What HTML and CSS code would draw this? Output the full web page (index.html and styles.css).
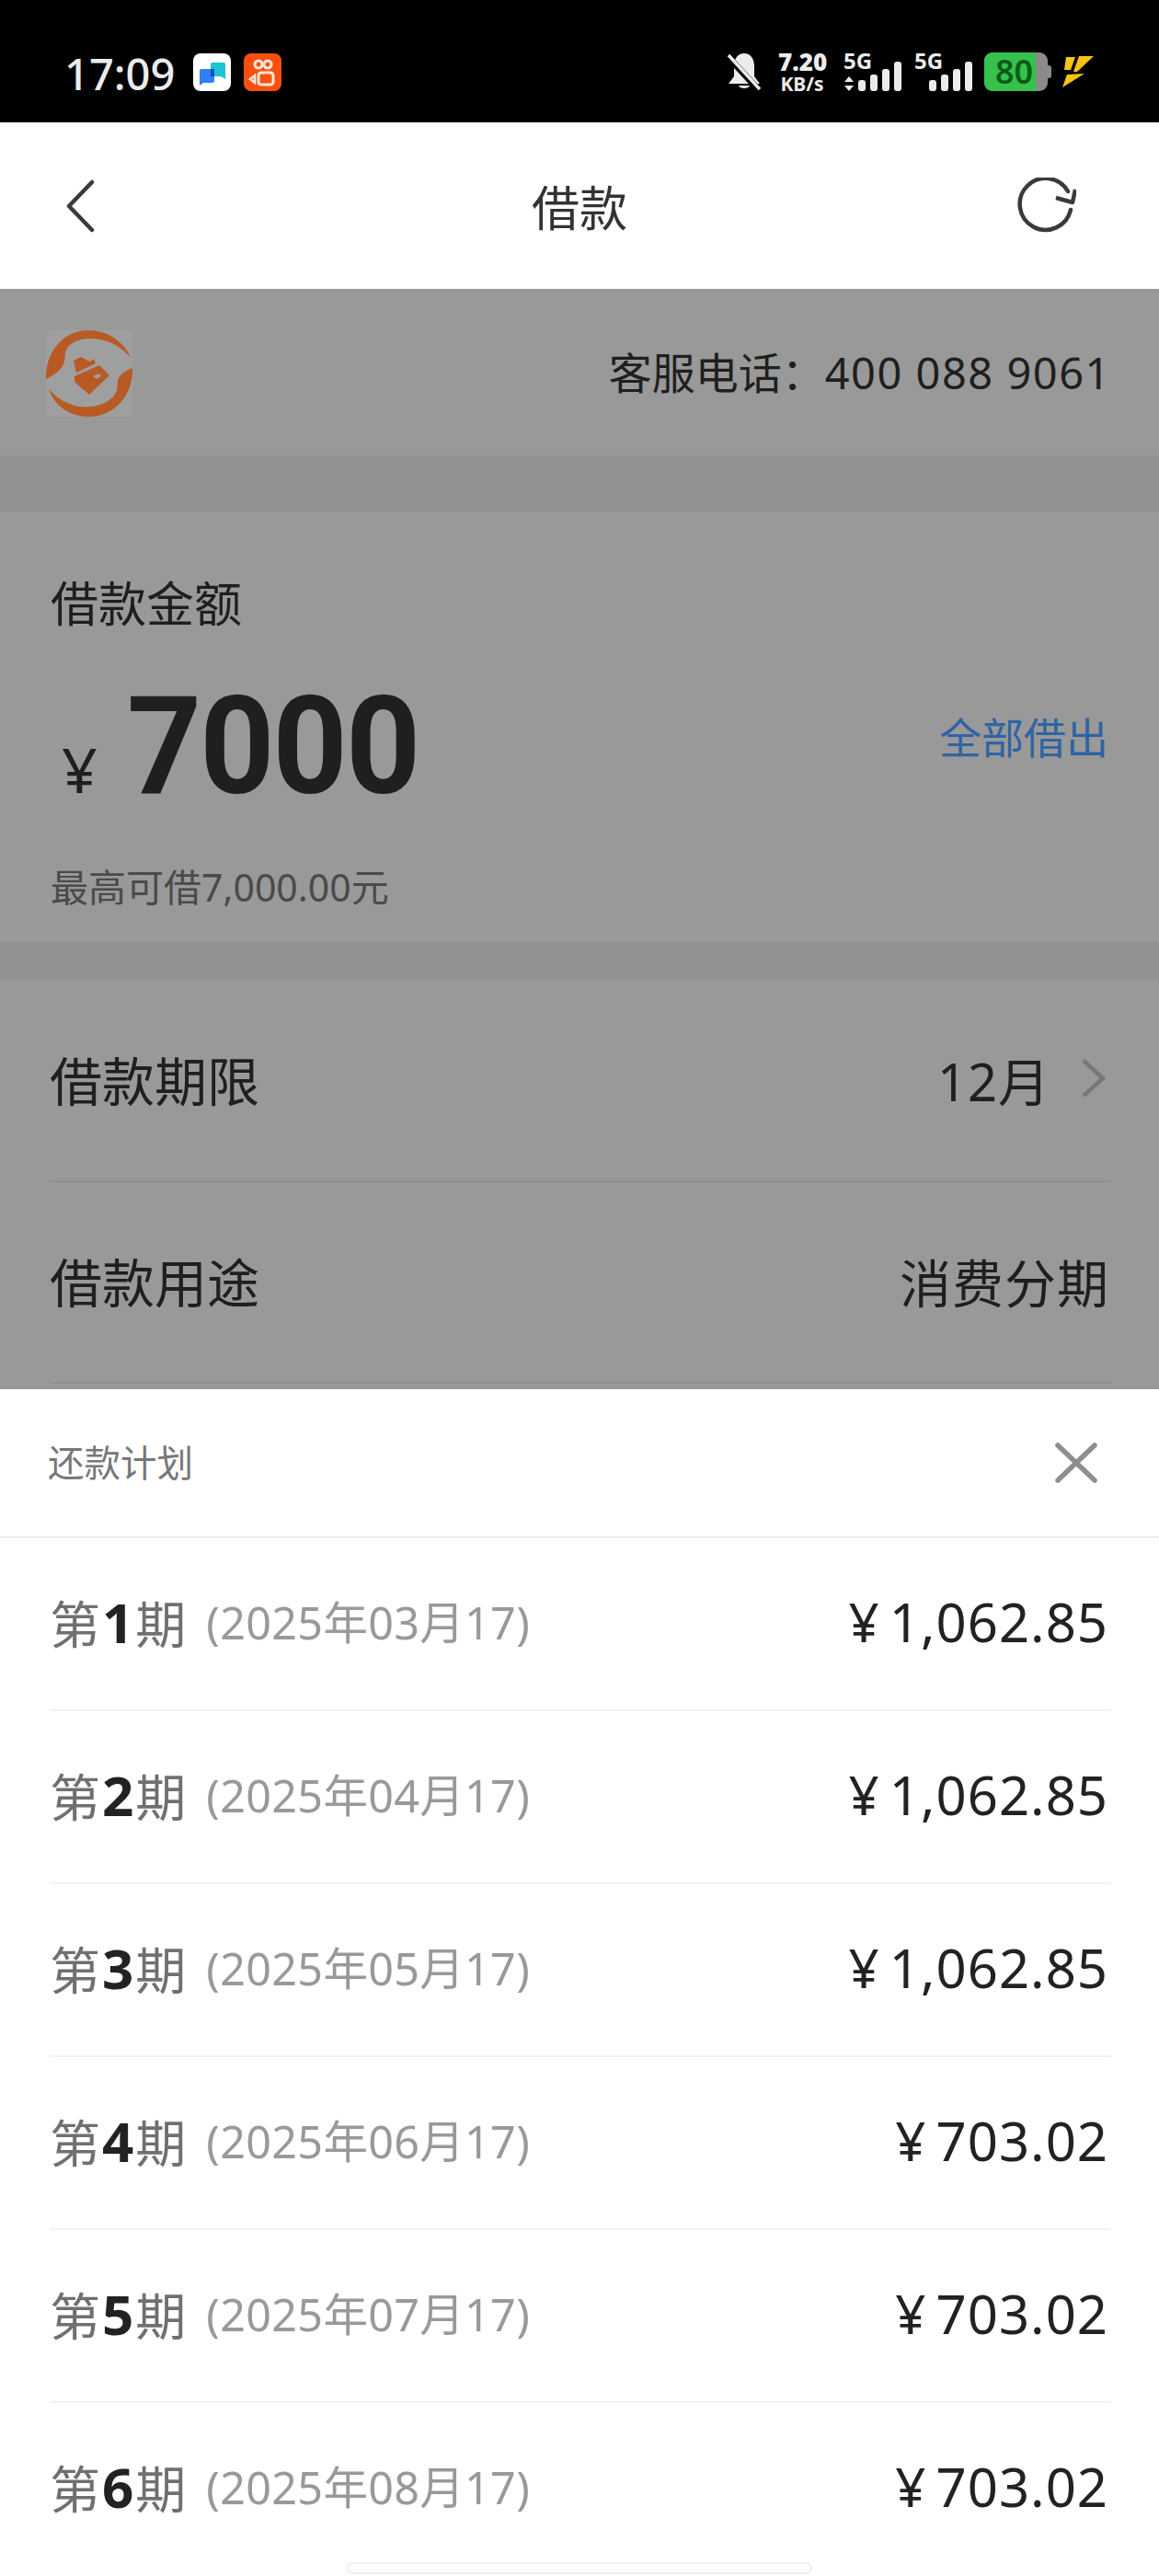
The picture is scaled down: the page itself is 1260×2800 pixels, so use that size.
FILE: index.html
```html
<!DOCTYPE html>
<html>
<head>
<meta charset="utf-8">
<title>借款</title>
<link rel="stylesheet" href="styles.css">
</head>
<body>
<div class="phone">

<div class="status">
	<div class="status-left">
		<span class="time">17:09</span>
		<svg class="app-ico" viewBox="0 0 41 41">
			<rect width="41" height="41" rx="8" fill="#fff"/>
			<path d="M19 12a2 2 0 0 1 2-2h12a2 2 0 0 1 2 2v16l-5-3H19z" fill="#1cc4d4"/>
			<path d="M7 19a2 2 0 0 1 2-2h12a2 2 0 0 1 2 2v11a2 2 0 0 1-2 2H11l-4 3z" fill="#2f80f5"/>
			<path d="M19 17h4v8h-4z" fill="#0b4fb0"/>
		</svg>
		<svg class="app-ico" viewBox="0 0 41 41">
			<rect width="41" height="41" rx="8" fill="#f9500f"/>
			<g fill="none" stroke="#fbe6da" stroke-width="3">
				<circle cx="16" cy="12" r="4"/>
				<circle cx="26" cy="12" r="4"/>
				<rect x="16" y="21" width="16" height="13" rx="3"/>
			</g>
			<path d="M12 24v8l-5-4z" fill="none" stroke="#fbe6da" stroke-width="2.5"/>
		</svg>
	</div>
	<div class="status-right">
		<svg class="bell" viewBox="0 0 36 42">
			<path d="M18 1c7 0 11 6 11 14v11l6 8H1l6-8V15C7 7 11 1 18 1z" fill="#ececec"/>
			<path d="M12 36h12c-1 4-11 4-12 0z" fill="#ececec"/>
			<path d="M0 4l34 37" stroke="#000" stroke-width="7"/>
			<path d="M1 3l34 37" stroke="#ececec" stroke-width="3.5"/>
		</svg>
		<div class="speed"><b>7.20</b><span>KB/s</span></div>
		<div class="signal">
			<span class="net">5G</span>
			<svg class="arrows" viewBox="0 0 12 16"><path d="M6 0l5 6H1zM6 16l-5-6h10z" fill="#ececec"/></svg>
			<div class="bars"><i class="b1"></i><i class="b2"></i><i class="b3"></i><i class="b4"></i></div>
		</div>
		<div class="signal">
			<span class="net">5G</span>
			<div class="bars"><i class="b1"></i><i class="b2"></i><i class="b3"></i><i class="b4"></i></div>
		</div>
		<div class="battery"><div class="battery-in"><span>80</span></div></div>
		<svg class="bolt" viewBox="0 0 35 36">
			<path d="M4 2h10L9 16H2z" fill="#f6c512"/>
			<path d="M18 1h16L16 18h-4z" fill="#f6c512"/>
			<path d="M5 21l19-1L0 35z" fill="#f6c512"/>
		</svg>
	</div>
</div>

<div class="nav">
	<svg class="nav-back" viewBox="0 0 32 58"><path d="M29 3L4 29l25 26" fill="none" stroke="#3a3a3a" stroke-width="4.5" stroke-linecap="round" stroke-linejoin="round"/></svg>
	<div class="nav-title">借款</div>
	<svg class="nav-refresh" viewBox="0 0 66 62">
		<path d="M60 35A28 28 0 1 1 57 15" fill="none" stroke="#3a3a3a" stroke-width="4.5" stroke-linecap="round"/>
		<path d="M44 22l18 5 3-14" fill="none" stroke="#3a3a3a" stroke-width="4.5" stroke-linejoin="round"/>
	</svg>
</div>

<div class="dim">
	<div class="hotline">
		<svg class="logo" viewBox="0 0 94 94">
			<rect width="94" height="94" rx="6" fill="#9f9f9f"/>
			<path d="M0 53C-1 25 18 0 46 0c22 0 39 13 47 31C82 17 66 9 48 9 33 9 22 16 21 25c-1 10 0 18-21 28z" fill="#b85a24"/>
			<path d="M94 41c1 30-20 53-47 53-21 0-38-12-44-30 9 10 20 17 34 19 18 2 36-5 40-18 2-9-3-16 17-24z" fill="#b85a24"/>
			<path d="M30 33l8-4 10 5 4-3 2 5-21 10z" fill="#b85a24"/>
			<path d="M31 50l27-12 11 11-22 21-16-14z" fill="#b85a24"/>
			<path d="M51 50l6-3 3 3-5 3z" fill="#9f9f9f"/>
		</svg>
		<div class="hotline-text">客服电话：<span class="tel">400 088 9061</span></div>
	</div>

	<div class="amount-box">
		<div class="amount-label">借款金额</div>
		<div class="amount-line">
			<span class="yen">¥</span>
			<span class="amount-num">7000</span>
			<span class="borrow-all">全部借出</span>
		</div>
		<div class="amount-max">最高可借7,000.00元</div>
	</div>

	<div class="form">
		<div class="form-row">
			<span>借款期限</span>
			<span class="form-val">12月<svg class="chev" viewBox="0 0 26 42"><path d="M2 2l21 19L2 40" fill="none" stroke="#777" stroke-width="4.5"/></svg></span>
		</div>
		<div class="form-row">
			<span>借款用途</span>
			<span class="form-val">消费分期</span>
		</div>
	</div>
</div>

<div class="sheet">
	<div class="sheet-head">
		<span class="sheet-title">还款计划</span>
		<svg class="close" viewBox="0 0 46 44"><path d="M3 3l40 38M43 3L3 41" fill="none" stroke="#8e8e8e" stroke-width="5.5" stroke-linecap="round"/></svg>
	</div>
	<div class="plan">
		<div class="plan-row"><span class="term">第<b>1</b>期</span><span class="date">(2025年03月17)</span><span class="money">¥ 1,062.85</span></div>
		<div class="plan-row"><span class="term">第<b>2</b>期</span><span class="date">(2025年04月17)</span><span class="money">¥ 1,062.85</span></div>
		<div class="plan-row"><span class="term">第<b>3</b>期</span><span class="date">(2025年05月17)</span><span class="money">¥ 1,062.85</span></div>
		<div class="plan-row"><span class="term">第<b>4</b>期</span><span class="date">(2025年06月17)</span><span class="money">¥ 703.02</span></div>
		<div class="plan-row"><span class="term">第<b>5</b>期</span><span class="date">(2025年07月17)</span><span class="money">¥ 703.02</span></div>
		<div class="plan-row last"><span class="term">第<b>6</b>期</span><span class="date">(2025年08月17)</span><span class="money">¥ 703.02</span></div>
	</div>
	<div class="home-bar"></div>
</div>

</div>
</body>
</html>
```

FILE: styles.css
```css
html, body { margin: 0; padding: 0; background: #fff; }
body { font-family: "Noto Sans", "Noto Sans CJK SC", sans-serif; color: #222; }
.phone { width: 1260px; height: 2800px; overflow: hidden; }

/* status bar */
.status { height: 133px; background: #000; display: flex; justify-content: space-between; padding: 57px 70px 0 70px; box-sizing: border-box; color: #ececec; }
.status-left { display: flex; align-items: flex-start; }
.time { font-size: 47px; font-weight: 500; line-height: 46px; margin-top: 0; width: 140px; }
.app-ico { width: 41px; height: 41px; margin-right: 14px; margin-top: 1px; }
.status-right { display: flex; align-items: flex-start; }
.bell { width: 36px; height: 42px; margin-right: 19px; }
.speed { width: 52px; margin-right: 19px; margin-top: -3px; font-weight: 700; text-align: center; }
.speed b { display: block; font-size: 26px; line-height: 26px; }
.speed span { display: block; font-size: 21px; line-height: 22px; white-space: nowrap; }
.signal { width: 64px; height: 42px; position: relative; margin-right: 13px; }
.net { position: absolute; left: 0; top: -3px; font-size: 24px; font-weight: 700; line-height: 24px; }
.arrows { position: absolute; left: 0; top: 26px; width: 12px; height: 16px; }
.bars { position: absolute; left: 16px; bottom: 0; display: flex; align-items: flex-end; gap: 5px; }
.bars i { display: block; width: 8px; border-radius: 3px; background: #ececec; }
.bars .b1 { height: 12px; }
.bars .b2 { height: 18px; }
.bars .b3 { height: 24px; }
.bars .b4 { height: 32px; }
.battery { width: 69px; height: 42px; margin-left: -1px; margin-right: 16px; background: #8b8b8b; border-radius: 9px; position: relative; }
.battery:after { content: ""; position: absolute; right: -4px; top: 14px; width: 4px; height: 14px; background: #8b8b8b; border-radius: 0 3px 3px 0; }
.battery-in { width: 56px; height: 42px; background: #35c24c; border-radius: 9px 0 0 9px; font-size: 36px; line-height: 42px; font-weight: 600; color: #0b5c16; text-align: center; padding-left: 9px; box-sizing: border-box; }
.bolt { width: 35px; height: 36px; margin-top: 3px; }

/* title bar */
.nav { height: 181px; background: #fff; display: grid; grid-template-columns: 1fr auto 1fr; align-items: center; padding: 0 71px; }
.nav-back { width: 32px; height: 58px; }
.nav-title { font-size: 52px; color: #333; }
.nav-refresh { width: 66px; height: 62px; justify-self: end; margin-right: 19px; }

/* dimmed page */
.dim { height: 1196px; background: #999; }
.hotline { height: 242px; display: flex; align-items: flex-start; justify-content: space-between; padding: 45px 52px 0 50px; box-sizing: border-box; border-bottom: 61px solid #929292; }
.logo { width: 94px; height: 94px; }
.hotline-text { font-size: 47px; line-height: 92px; color: #1f1f1f; }
.tel { letter-spacing: 1.5px; }
.amount-box { height: 468px; padding: 0 52px 0 55px; border-bottom: 42px solid #929292; }
.amount-label { font-size: 52px; line-height: 72px; padding-top: 64px; color: #1f1f1f; }
.amount-line { display: flex; align-items: baseline; height: 146px; margin-top: 46px; }
.yen { font-size: 68px; color: #1f1f1f; margin-left: 12px; width: 71px; }
.amount-num { font-family: Roboto, sans-serif; font-weight: 700; font-size: 149px; line-height: 146px; letter-spacing: -2px; color: #1f1f1f; transform: scaleX(.95); transform-origin: 0 50%; }
.borrow-all { margin-left: auto; margin-bottom: 24px; margin-right: 3px; font-size: 46px; color: #2f64a3; align-self: center; }
.amount-max { font-size: 41px; line-height: 56px; margin-top: 52px; color: #4a4a4a; }
.form { padding: 0 52px 0 54px; }
.form-row { height: 217px; display: flex; align-items: center; justify-content: space-between; font-size: 57px; color: #1f1f1f; border-bottom: 2px solid #909090; }
.form-row > span { padding-bottom: 5px; }
.form-val { display: flex; align-items: center; font-size: 56px; letter-spacing: 2px; margin-right: 2px; }
.form-val:last-child { letter-spacing: 1px; }
.chev { width: 26px; height: 42px; margin-left: 34px; margin-right: 4px; }

/* repayment sheet */
.sheet { height: 1290px; background: #fff; position: relative; }
.sheet-head { height: 160px; display: flex; align-items: center; justify-content: space-between; padding: 0 67px 0 52px; border-bottom: 2px solid #eee; }
.sheet-title { font-size: 39.5px; color: #777; padding-bottom: 5px; }
.close { width: 46px; height: 44px; }
.plan { padding: 0 52px 0 54px; }
.plan-row { height: 186px; display: flex; align-items: center; border-bottom: 2px solid #f2f2f2; }
.plan-row > span { padding-bottom: 5px; }
.plan-row.last { border-bottom: none; }
.term { font-size: 55px; color: #707070; white-space: nowrap; }
.term b { color: #222; font-weight: 700; font-size: 60px; margin: 0 2px; }
.plan-row > .date { font-size: 48.5px; letter-spacing: .3px; color: #999; margin-left: 22px; padding-bottom: 8px; }
.money { margin-left: auto; margin-right: 3px; font-size: 58px; color: #222; letter-spacing: 1px; word-spacing: -6px; }
.home-bar { position: absolute; left: 377px; top: 1275px; width: 506px; height: 13px; box-sizing: border-box; border: 2px solid #eee; border-radius: 7px; background: #fff; }
```
